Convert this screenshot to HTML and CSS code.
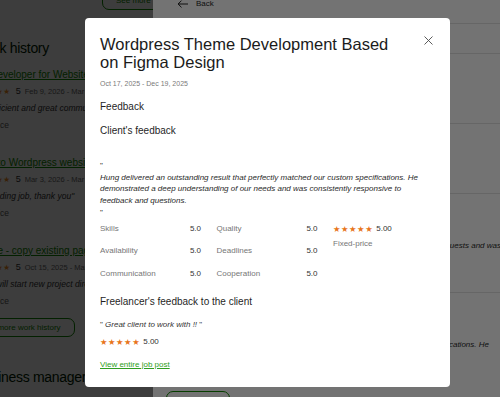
FILE: index.html
```html
<!DOCTYPE html>
<html lang="en">
<head>
    <meta charset="UTF-8">
    <meta name="viewport" content="width=device-width, initial-scale=1.0">
    <title>Work history - feedback</title>
    <link rel="stylesheet" href="styles.css">
</head>
<body>

    <!-- Profile page (behind the drawer) -->
    <div class="page">
        <button class="outline-btn see-more">See more</button>
        <h2 class="section-title">Work history</h2>

        <div class="jobs">
            <div class="job">
                <a class="job-title" href="#">Web Developer for Website redesign</a>
                <div class="job-meta"><span class="stars">★★★★★</span><span class="job-score">5</span><span class="job-date">Feb 9, 2026 - Mar 2, 2026</span></div>
                <p class="job-comment">"Very efficient and great communication"</p>
                <p class="job-type">Fixed-price</p>
            </div>
            <div class="job">
                <a class="job-title" href="#">Figma to Wordpress website</a>
                <div class="job-meta"><span class="stars">★★★★★</span><span class="job-score">5</span><span class="job-date">Mar 3, 2026 - Mar 2, 2026</span></div>
                <p class="job-comment">"Outstanding job, thank you"</p>
                <p class="job-type">Fixed-price</p>
            </div>
            <div class="job">
                <a class="job-title" href="#">Website - copy existing page</a>
                <div class="job-meta"><span class="stars">★★★★★</span><span class="job-score">5</span><span class="job-date">Oct 15, 2025 - Mar 1, 2026</span></div>
                <p class="job-comment">"Great, will start new project directly"</p>
                <p class="job-type">Fixed-price</p>
            </div>
        </div>

        <button class="outline-btn more-history">See more work history</button>
        <h2 class="section-title business">Business manager</h2>
    </div>
    <div class="page-scrim"></div>

    <!-- Side drawer -->
    <aside class="drawer">
        <div class="drawer-body">
            <div class="back-row">
                <svg width="11" height="8" viewBox="0 0 11 8"><path d="M11 4H1.2M4.5 0.6L1.1 4l3.4 3.4" fill="none" stroke="#222" stroke-width="1"/></svg>
                <span>Back</span>
            </div>
            <div class="drawer-heading">Reviews</div>
            <div class="review">
                <p class="review-title">Landing page</p>
                <p class="review-meta">5.0</p>
                <p class="review-text">"Good work"</p>
            </div>
            <div class="review">
                <p class="review-title">Blog theme</p>
                <p class="review-meta">5.0</p>
                <p class="review-text">"Thanks"</p>
            </div>
            <div class="review">
                <p class="review-title">Website fixes</p>
                <p class="review-meta">5.0</p>
                <p class="review-text">He handled all our feedback very quickly and fulfilled each of our additional requests and was always available to help during the whole project.</p>
                <p class="review-type">Fixed-price</p>
            </div>
            <div class="review last">
                <p class="review-title">Wordpress theme</p>
                <p class="review-meta">5.0</p>
                <p class="review-text">Hung delivered an outstanding result that perfectly matched our custom specifications. He demonstrated a deep understanding of our needs.</p>
                <p class="review-type">Fixed-price</p>
            </div>
            <button class="outline-btn drawer-more">Load more</button>
        </div>
    </aside>
    <div class="modal-scrim"></div>

    <!-- Feedback modal -->
    <div class="modal">
        <div class="modal-header">
            <h2 class="modal-title">Wordpress Theme Development Based on Figma Design</h2>
            <button class="close-btn">
                <svg width="9" height="9" viewBox="0 0 9 9"><path d="M0.5 0.5l8 8M8.5 0.5l-8 8" fill="none" stroke="#4a4a4a" stroke-width="0.9"/></svg>
            </button>
        </div>
        <p class="modal-dates">Oct 17, 2025 - Dec 19, 2025</p>

        <h3 class="block-title">Feedback</h3>
        <h4 class="block-title client-title">Client's feedback</h4>
        <p class="client-quote">"<br><em>Hung delivered an outstanding result that perfectly matched our custom specifications. He demonstrated a deep understanding of our needs and was consistently responsive to feedback and questions.</em><br>"</p>

        <div class="scores">
            <div class="overall">
                <div class="rating"><span class="stars">★★★★★</span><span>5.00</span></div>
                <div class="contract">Fixed-price</div>
            </div>
            <div class="score"><span>Skills</span><span class="score-val">5.0</span></div>
            <div class="score"><span>Quality</span><span class="score-val">5.0</span></div>
            <div class="score"><span>Availability</span><span class="score-val">5.0</span></div>
            <div class="score"><span>Deadlines</span><span class="score-val">5.0</span></div>
            <div class="score"><span>Communication</span><span class="score-val">5.0</span></div>
            <div class="score"><span>Cooperation</span><span class="score-val">5.0</span></div>
        </div>

        <h3 class="block-title freelancer-title">Freelancer's feedback to the client</h3>
        <p class="freelancer-quote">" <em>Great client to work with !!</em> "</p>
        <div class="rating freelancer-rating"><span class="stars">★★★★★</span><span>5.00</span></div>

        <a class="job-link" href="#">View entire job post</a>
    </div>

</body>
</html>
```

FILE: styles.css
```css
* {
    box-sizing: border-box;
}
body {
    margin: 0;
    height: 397px;
    overflow: hidden;
    position: relative;
    background: #fff;
    font-family: "Liberation Sans", Arial, sans-serif;
    color: #1f1f1f;
}
p {
    margin: 0;
}
.stars {
    font-family: "DejaVu Sans", sans-serif;
    color: #e8751a;
    letter-spacing: 0.6px;
}

/* profile page */
.page {
    margin-left: -33px;
    width: 420px;
    white-space: nowrap;
}
.outline-btn {
    display: block;
    height: 20px;
    padding: 0 13px;
    background: #fff;
    border: 1.5px solid #108a00;
    border-radius: 7px;
    color: #108a00;
    font-family: inherit;
    font-size: 8px;
}
.see-more {
    margin: -10px 0 0 135px;
}
.section-title {
    margin: 28px 0 0 8px;
    font-size: 14px;
    font-weight: normal;
    letter-spacing: -0.3px;
    line-height: 20px;
    color: #001e00;
}
.jobs {
    margin-top: 7.5px;
}
.job + .job {
    margin-top: 20px;
}
.job > * {
    display: block;
    line-height: 17px;
}
.job-title {
    font-size: 10px;
    color: #108a00;
}
.job-meta {
    font-size: 8px;
    display: flex;
    align-items: center;
}
.job-meta .stars {
    margin-left: 7px;
    font-size: 7.5px;
    color: #f08a1e;
}
.job-score {
    margin-left: 5px;
    font-size: 9px;
    color: #333;
}
.job-date {
    margin-left: 4px;
    font-size: 7.5px;
    color: #6b6b6b;
}
.job-comment {
    font-size: 8.5px;
    font-style: italic;
    color: #333;
}
.job-type {
    font-size: 8.5px;
    color: #5e5e5e;
}
.more-history {
    margin-top: 8.5px;
    height: 19px;
}
.business {
    margin-top: 30px;
}
.page-scrim {
    position: absolute;
    inset: 0;
    background: rgba(0, 0, 0, 0.47);
}

/* drawer */
.drawer {
    position: absolute;
    top: 0;
    left: 153px;
    width: 400px;
    height: 100%;
    padding: 0 18px;
    background: #fff;
}
.drawer-body {
    margin-top: -8px;
}
.back-row {
    display: flex;
    align-items: center;
    gap: 8px;
    padding: 4px 0 12px 6px;
    line-height: 15px;
    font-size: 8px;
    border-bottom: 1px solid #e2e2e2;
}
.drawer-heading {
    padding: 7px 0 6px;
    line-height: 16px;
    font-size: 12px;
    border-bottom: 1px solid #e2e2e2;
}
.review {
    padding: 12px 0 11px;
    border-bottom: 1px solid #e2e2e2;
}
.review.last {
    border-bottom: none;
}
.review-title {
    font-size: 10px;
    line-height: 16px;
    color: #108a00;
}
.review-meta {
    margin-top: 2px;
    font-size: 8px;
    line-height: 12px;
}
.review-text {
    margin-top: 4px;
    font-size: 8px;
    font-style: italic;
    line-height: 12px;
    color: #2a2a2a;
}
.review-type {
    margin-top: 5px;
    font-size: 8px;
    line-height: 12px;
    color: #767676;
}
.drawer-more {
    margin-left: -5px;
    width: 64px;
    height: 28px;
}
.modal-scrim {
    position: absolute;
    inset: 0;
    background: rgba(0, 0, 0, 0.55);
}

/* modal */
.modal {
    position: absolute;
    top: 18px;
    left: 85px;
    width: 365px;
    padding: 17px 17px 16px 15px;
    background: #fff;
    border-radius: 4px;
}
.modal-header {
    display: flex;
    align-items: flex-start;
    gap: 24px;
}
.modal-title {
    flex: 1;
    margin: 0;
    font-size: 16.5px;
    font-weight: normal;
    line-height: 18px;
    color: #1b1b1b;
}
.close-btn {
    margin-top: 1px;
    padding: 0;
    width: 9px;
    height: 9px;
    border: none;
    background: none;
    line-height: 0;
}
.modal-dates {
    margin-top: 8px;
    font-size: 7px;
    line-height: 10px;
    color: #7a7a7a;
}
.block-title {
    margin: 11px 0 0;
    font-size: 10px;
    font-weight: normal;
    line-height: 14px;
    color: #1f1f1f;
}
.client-title {
    margin-top: 10px;
}
.client-quote {
    margin-top: 22px;
    max-width: 327px;
    font-size: 8px;
    line-height: 11.7px;
    color: #2a2a2a;
}
.scores {
    display: grid;
    grid-template-columns: 101px 101px auto;
    column-gap: 15.5px;
    row-gap: 10.5px;
    margin-top: 4px;
    font-size: 8px;
    line-height: 12px;
}
.score {
    display: flex;
    justify-content: space-between;
    color: #767676;
}
.score-val {
    color: #333;
}
.overall {
    grid-column: 3;
    grid-row: 1 / span 3;
}
.rating {
    display: flex;
    align-items: center;
    gap: 3px;
    font-size: 8px;
    line-height: 12px;
    color: #333;
}
.rating .stars {
    font-size: 8.3px;
}
.contract {
    margin-top: 3px;
    color: #767676;
}
.freelancer-title {
    margin-top: 15px;
}
.freelancer-quote {
    margin-top: 10px;
    font-size: 8px;
    line-height: 12px;
    color: #333;
}
.freelancer-rating {
    margin-top: 5px;
}
.job-link {
    display: block;
    margin-top: 11px;
    width: max-content;
    font-size: 8px;
    line-height: 12px;
    color: #2f9e22;
}
```
